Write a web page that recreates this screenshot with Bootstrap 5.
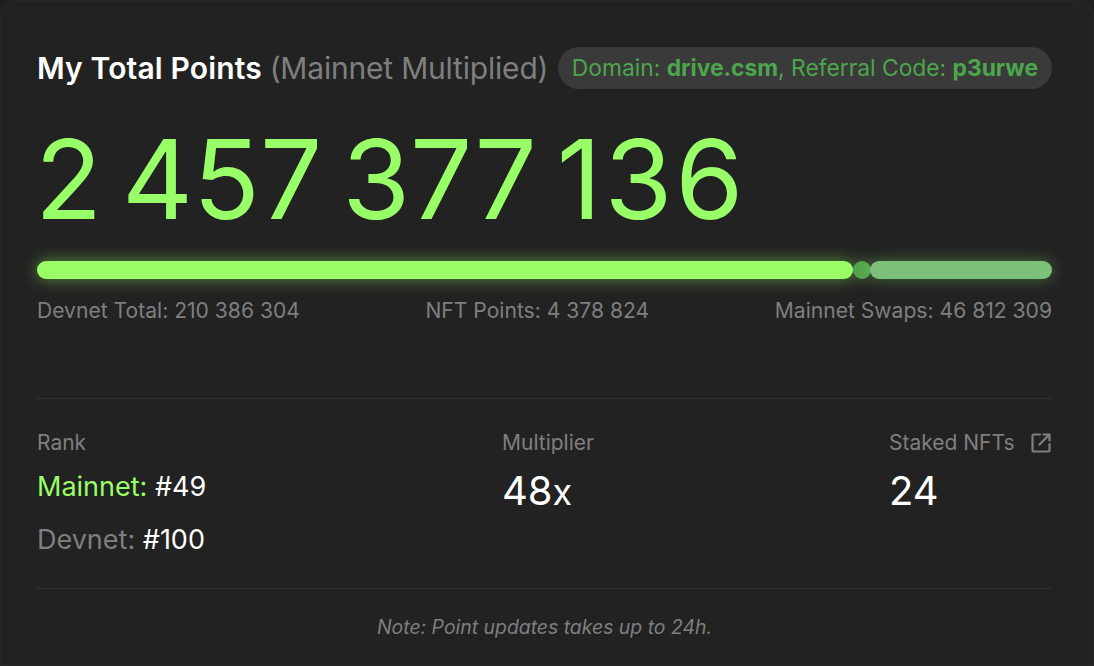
<!DOCTYPE html>
<html lang="en">
<head>
    <meta charset="UTF-8">
    <meta name="viewport" content="width=device-width, initial-scale=1.0">
    <title>My Total Points</title>
    <link rel="stylesheet" href="https://cdn.jsdelivr.net/npm/bootstrap@5.3.0/dist/css/bootstrap.min.css">
    <style>
        html, body { height: 100%; background-color: #1e1e1e; overflow: hidden; }
        body { font-family: Inter, "Liberation Sans", sans-serif; }
        .points-panel { height: 666px; background: #222222; border: 1px solid #282828; border-radius: 16px 16px 0 0; padding: 46px 41px 0 36px; }
        .panel-title { font-size: 30px; line-height: 40px; font-weight: 600; letter-spacing: .15px; color: #fff; margin: 0; white-space: nowrap; }
        .panel-title span { font-weight: 400; color: #7f7f7f; letter-spacing: -.2px; }
        .code-pill { height: 42px; padding: 0 14px; border-radius: 21px; background: #3a3a3a; color: #4ca64c; font-size: 22.8px; white-space: nowrap; }
        .code-pill b { font-weight: 700; }
        .total-num { font-size: 110px; line-height: 130px; color: #98ff68; font-weight: 400; margin: 25px 0 0 -2px; word-spacing: -11px; white-space: nowrap; }
        .total-tail { letter-spacing: 3px; }
        .bar-row { margin-top: 17px; height: 18px; }
        .bar-seg { height: 18px; border-radius: 9px; }
        .seg-devnet { width: 816px; background: #9aff66; box-shadow: 0 0 16px rgba(154,255,102,.5); }
        .seg-nft { width: 18px; margin: 0 -1px 0 0; background: #55a34f; box-shadow: 0 0 16px rgba(154,255,102,.35); }
        .seg-swaps { flex: 1; background: #7dc07a; box-shadow: 0 0 16px rgba(154,255,102,.35); }
        .bar-labels { margin-top: 19px; font-size: 21.1px; line-height: 26px; color: #7f7f7f; white-space: nowrap; }
        .rule-line { border: 0; border-top: 1px solid #333; opacity: 1; margin: 0; }
        .stats-rule { margin-top: 74px; }
        .stats-row { padding-top: 31px; height: 189px; }
        .stat-label { font-size: 21px; line-height: 26px; color: #7f7f7f; }
        .stat-big { font-size: 40px; line-height: 46px; color: #fff; margin-top: 12px; }
        .stat-big small { font-size: 36px; }
        .rank-line { font-size: 27px; line-height: 34px; color: #fff; margin-top: 14px; }
        .rank-line + .rank-line { margin-top: 19px; }
        .rank-main { color: #9aff66; }
        .rank-dev { color: #7f7f7f; }
        .rank-col { width: 465px; }
        .stake-col { width: 163px; }
        .stake-icon { margin-right: 1px; }
        .note-text { margin-top: 26px; font-size: 19.400px; line-height: 24px; font-style: italic; color: #7f7f7f; text-align: center; }
    </style>
</head>
<body>
    <div class="points-panel">
        <div class="d-flex align-items-center">
            <h1 class="panel-title">My Total Points <span>(Mainnet Multiplied)</span></h1>
            <div class="code-pill d-flex align-items-center ms-auto"><div>Domain: <b>drive.csm</b>, Referral Code: <b>p3urwe</b></div></div>
        </div>

        <div class="total-num">2 457 377 <span class="total-tail">136</span></div>

        <div class="bar-row d-flex">
            <div class="bar-seg seg-devnet"></div>
            <div class="bar-seg seg-nft"></div>
            <div class="bar-seg seg-swaps"></div>
        </div>
        <div class="bar-labels d-flex justify-content-between">
            <div>Devnet Total: 210 386 304</div>
            <div>NFT Points: 4 378 824</div>
            <div>Mainnet Swaps: 46 812 309</div>
        </div>

        <hr class="rule-line stats-rule">

        <div class="stats-row d-flex">
            <div class="rank-col">
                <div class="stat-label">Rank</div>
                <div class="rank-line"><span class="rank-main">Mainnet:</span> #49</div>
                <div class="rank-line"><span class="rank-dev">Devnet:</span> #100</div>
            </div>
            <div class="flex-grow-1">
                <div class="stat-label">Multiplier</div>
                <div class="stat-big">48<small>x</small></div>
            </div>
            <div class="stake-col">
                <div class="stat-label d-flex justify-content-between align-items-center">
                    <span>Staked NFTs</span>
                    <svg class="stake-icon" width="20" height="20" viewBox="0 0 20 20" fill="none" stroke="#7f7f7f" stroke-width="2.200" stroke-linecap="round" stroke-linejoin="round">
                        <path d="M9 1.500H3A1.500 1.500 0 0 0 1.500 3v14A1.500 1.500 0 0 0 3 18.500h14a1.500 1.500 0 0 0 1.500-1.500v-6"/>
                        <path d="M12.500 1.500h6v6M18.500 1.500 8.500 11.500"/>
                    </svg>
                </div>
                <div class="stat-big">24</div>
            </div>
        </div>

        <hr class="rule-line">
        <div class="note-text">Note: Point updates takes up to 24h.</div>
    </div>

    <script src="https://cdn.jsdelivr.net/npm/bootstrap@5.3.0/dist/js/bootstrap.bundle.min.js"></script>
</body>
</html>
